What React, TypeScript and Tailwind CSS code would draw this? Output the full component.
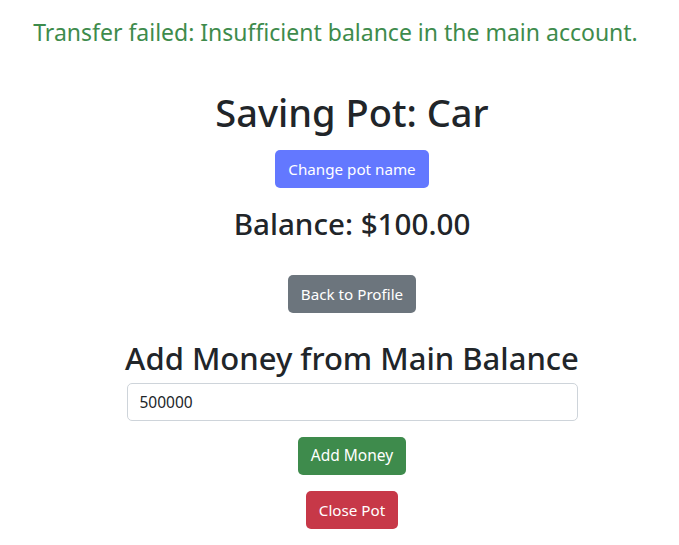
export default function App() {
  const font = { fontFamily: '"Noto Sans", "Open Sans", sans-serif' };

  return (
    <div className="min-h-[545px] bg-white text-[#212529]" style={font}>
      {/* Alert message */}
      <div className="pt-[18px] flex justify-center pr-[8px]">
        <p className="h-[29px] leading-[29px] text-[23px] text-[#3e8b4c]">
          Transfer failed: Insufficient balance in the main account.
        </p>
      </div>

      <div className="pl-[25px] flex flex-col items-center">
        <h1 className="mt-[41px] h-[48px] leading-[48px] text-[38px] font-medium">Saving Pot: Car</h1>

        <button className="mt-[14px] h-[38px] px-[13px] rounded-[5px] bg-[#6378ff] text-white text-[15.2px]">
          Change pot name
        </button>

        <h2 className="mt-[17px] h-[38px] leading-[38px] text-[29.6px] font-medium">Balance: $100.00</h2>

        <button className="mt-[32px] h-[38px] px-[13px] rounded-[5px] bg-[#6c757d] text-white text-[15.2px]">
          Back to Profile
        </button>

        <h2 className="mt-[26px] h-[38px] leading-[38px] text-[31px] font-medium">Add Money from Main Balance</h2>

        <input
          className="mt-[6px] w-[451px] h-[38px] px-[12px] rounded-[5px] border border-[#ced4da] text-[15.5px] text-[#212529] outline-none"
          defaultValue="500000"
        />

        <button className="mt-[16px] h-[38px] px-[13px] rounded-[5px] bg-[#3e8b4c] text-white text-[15.5px]">
          Add Money
        </button>

        <button className="mt-[16px] h-[38px] px-[13px] rounded-[5px] bg-[#c73848] text-white text-[15.2px]">
          Close Pot
        </button>
      </div>
    </div>
  );
}
